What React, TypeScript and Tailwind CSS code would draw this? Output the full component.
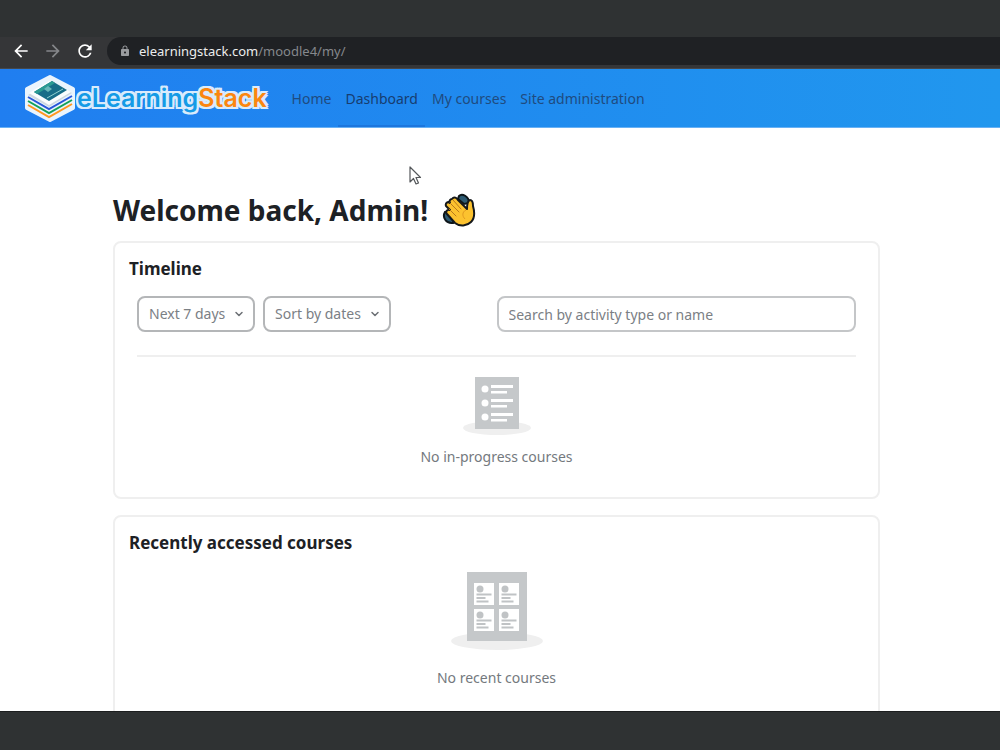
import type { ReactNode } from "react";
import { ChevronDown } from "lucide-react";
import { MdArrowBack, MdArrowForward, MdLock, MdRefresh } from "react-icons/md";

const navLinks = [
  { label: "Home", active: false },
  { label: "Dashboard", active: true },
  { label: "My courses", active: false },
  { label: "Site administration", active: false },
];

function BrowserBar() {
  return (
    <div className="flex h-8 shrink-0 items-start border-b border-[#44484d] bg-[#353638] pl-[11px]">
      <div className="flex h-7 items-center gap-3 pr-3">
        <button aria-label="Back" className="text-white">
          <MdArrowBack className="size-5" />
        </button>
        <button aria-label="Forward" className="text-[#85878a]">
          <MdArrowForward className="size-5" />
        </button>
        <button aria-label="Reload" className="text-white">
          <MdRefresh className="size-5" />
        </button>
      </div>
      <div className="flex h-7 flex-1 items-center gap-2 rounded-l-full bg-[#1f2124] pl-3">
        <MdLock className="size-3 text-[#9a9c9f]" />
        <span className="text-[13px] leading-5 text-[#85888c]">
          <span className="text-[#eceded]">elearningstack.com</span>/moodle4/my/
        </span>
      </div>
    </div>
  );
}

function LogoMark() {
  return (
    <svg viewBox="0 0 54 50" className="h-[50px] w-[54px] shrink-0" aria-hidden="true">
      <path
        d="M27 4 L50 16 V35 L27 47 L4 35 V16 Z"
        fill="#eaf4fd"
        stroke="#eaf4fd"
        strokeWidth="4"
        strokeLinejoin="round"
      />
      <path d="M5 22 L27 7 L49 20 L26 34 Z" fill="#cfd9e0" />
      <path d="M6 20 L27 7 L48 19 L26 32 Z" fill="#fbfdfe" />
      <path d="M11 19 L29 8 L44 17 L26 28 Z" fill="#176d88" />
      <path d="M11 19 L29 8 L32 10 L14 21 Z" fill="#2a9a92" />
      <path d="M21 16 l4 -3 l4 3 l-4 3 Z" fill="#67b7b8" />
      <path d="M24 25 L40 16" stroke="#8fd0cf" strokeWidth="1" fill="none" />
      <path d="M5 24 L26 36 L49 23" stroke="#2857d8" strokeWidth="2" fill="none" />
      <path d="M5 28 L26 40 L49 27" stroke="#14a05a" strokeWidth="2" fill="none" />
      <path d="M5 32 L26 44 L49 31" stroke="#ff9720" strokeWidth="2" fill="none" />
    </svg>
  );
}

function SiteHeader() {
  return (
    <header className="flex h-[59px] shrink-0 items-stretch border-b border-[#69b1f4] bg-linear-to-r from-[#207ef0] to-[#2197ee] pl-[23px]">
      <a href="#" className="flex items-center" aria-label="eLearningStack">
        <LogoMark />
        <span className="font-['Inter',sans-serif] text-[25px] leading-8 font-semibold text-[#149be6] [text-shadow:2px_0_#d9ebfc,-2px_0_#d9ebfc,0_2px_#d9ebfc,0_-2px_#d9ebfc,2px_2px_#d9ebfc,-2px_2px_#d9ebfc,2px_-2px_#d9ebfc,-2px_-2px_#d9ebfc]">
          eLearning<span className="text-[#fb8610]">Stack</span>
        </span>
      </a>
      <nav className="flex items-stretch pl-[18px]">
        {navLinks.map((link) => (
          <a
            key={link.label}
            href="#"
            className={
              link.active
                ? "flex items-center border-b-2 border-[#1c76dd] px-[7px] pt-1 text-sm text-[#173d70]"
                : "flex items-center border-b-2 border-transparent px-[7px] pt-1 text-sm text-[#1f4b80]"
            }
          >
            {link.label}
          </a>
        ))}
      </nav>
    </header>
  );
}

function WavingHand() {
  return (
    <svg viewBox="0 0 34 36" className="h-9 w-[34px]" role="img" aria-label="Waving hand">
      <g fill="#2d5a72" stroke="#0d1519" strokeWidth="2">
        <path d="M17 4 C20 1 27 4 27 11 L22 12 L16 7 Z" />
        <path d="M3 20 C0 25 4 32 11 31 L12 26 L7 20 Z" />
      </g>
      <path
        d="M10 7 C12 4 15 6 16 8 L23 15 L25 17 C25 13 25 9 28 8 C31 8 31 11 31 14 C33 21 33 26 29 30 C25 34 18 35 13 31 L5 22 C3 20 5 17 8 18 L4 14 C3 11 6 9 8 11 C7 9 8 7 10 7 Z"
        fill="#fcc22f"
        stroke="#15181a"
        strokeWidth="2"
        strokeLinejoin="round"
      />
      <path
        d="M11 8 L19 17 M8 11 L17 20 M7 17 L14 24"
        stroke="#b8791c"
        strokeWidth="1"
        strokeLinecap="round"
        fill="none"
      />
      <path d="M24 18 C20 20 20 24 23 27" stroke="#e29a20" strokeWidth="1" fill="none" />
    </svg>
  );
}

function FilterSelect({ label, options, width }: { label: string; options: string[]; width: string }) {
  return (
    <div className={`relative h-9 ${width}`}>
      <select
        aria-label={label}
        className="size-full appearance-none rounded-lg border-2 border-[#b4b6b8] bg-white pl-[10px] text-sm text-[#7b8085]"
      >
        {options.map((option) => (
          <option key={option}>{option}</option>
        ))}
      </select>
      <ChevronDown
        strokeWidth={3}
        className="pointer-events-none absolute top-3 right-[10px] size-3 text-[#6c7075]"
      />
    </div>
  );
}

function Card({ title, children }: { title: string; children: ReactNode }) {
  return (
    <section className="rounded-lg border-2 border-[#efefef] bg-white px-[14px] pt-[14px]">
      <h2 className="text-[17px] leading-6 font-bold text-[#1d2125]">{title}</h2>
      {children}
    </section>
  );
}

function ListIllustration() {
  return (
    <svg viewBox="0 0 70 58" className="h-[58px] w-[70px]" aria-hidden="true">
      <ellipse cx="35" cy="51" rx="34" ry="7" fill="#efefef" />
      <rect x="13" width="44" height="52" fill="#c5c8ca" />
      {[11, 25, 39].map((y) => (
        <g key={y} fill="#fff">
          <circle cx="23" cy={y + 1} r="3.5" />
          <rect x="29" y={y - 3} width="22" height="3" />
          <rect x="29" y={y + 3} width="16" height="2.5" />
        </g>
      ))}
    </svg>
  );
}

function CoursesIllustration() {
  const tiles = [
    [22, 11],
    [47, 11],
    [22, 37],
    [47, 37],
  ];

  return (
    <svg viewBox="0 0 92 78" className="h-[78px] w-[92px]" aria-hidden="true">
      <ellipse cx="46" cy="69" rx="46" ry="9" fill="#efefef" />
      <rect x="16" width="60" height="69" fill="#c5c8ca" />
      {tiles.map(([x, y]) => (
        <g key={`${x}-${y}`} fill="#c0c3c5">
          <rect x={x + 1} y={y} width="20" height="22" fill="#fff" />
          <circle cx={x + 7} cy={y + 6} r="3.5" />
          <rect x={x + 3.5} y={y + 10.5} width="15" height="2" />
          <rect x={x + 3.5} y={y + 14} width="9" height="2" />
          <rect x={x + 3.5} y={y + 17.5} width="12" height="2" />
        </g>
      ))}
    </svg>
  );
}

export default function App() {
  return (
    <div className="flex h-screen flex-col overflow-hidden bg-[#2f3233] pt-[37px] font-['Noto_Sans',sans-serif]">
      <BrowserBar />
      <SiteHeader />
      <main className="min-h-0 flex-1 overflow-hidden bg-white pt-16 pr-[120px] pl-[113px]">
        <h1 className="flex h-9 items-center gap-[14px] text-[28px] font-bold text-[#1d2125]">
          Welcome back, Admin! <WavingHand />
        </h1>
        <div className="flex flex-col gap-4 pt-[13px]">
          <Card title="Timeline">
            <div className="px-2 pt-[15px] pb-[30px]">
              <div className="flex gap-2 border-b-2 border-[#efefef] pb-[23px]">
                <FilterSelect
                  label="Filter timeline by date"
                  width="w-[118px]"
                  options={["Next 7 days", "Next 30 days", "Next 3 months"]}
                />
                <FilterSelect
                  label="Sort timeline items"
                  width="w-32"
                  options={["Sort by dates", "Sort by courses"]}
                />
                <input
                  type="search"
                  aria-label="Search by activity type or name"
                  placeholder="Search by activity type or name"
                  className="ml-auto h-9 w-1/2 rounded-lg border-2 border-[#c4c6c8] px-[10px] text-sm placeholder:text-[#7b8085]"
                />
              </div>
              <div className="flex flex-col items-center gap-3 pt-5 text-sm text-[#74797e]">
                <ListIllustration />
                <p>No in-progress courses</p>
              </div>
            </div>
          </Card>
          <Card title="Recently accessed courses">
            <div className="flex flex-col items-center gap-[18px] pt-[17px] pb-8 text-sm text-[#74797e]">
              <CoursesIllustration />
              <p>No recent courses</p>
            </div>
          </Card>
        </div>
      </main>
      <footer className="h-[39px] shrink-0 border-t border-[#1c1e1f]" />

      {/* Mouse pointer */}
      <svg viewBox="0 0 14 20" className="pointer-events-none absolute top-[165px] left-[408px] h-5 w-[14px]" aria-hidden="true">
        <path
          d="M2 2 V17 L5.500 13.500 L8 19 L10.500 18 L8 12.500 H12.500 Z"
          fill="#fff"
          stroke="#55585b"
          strokeWidth="1.200"
          strokeLinejoin="round"
        />
      </svg>
    </div>
  );
}
